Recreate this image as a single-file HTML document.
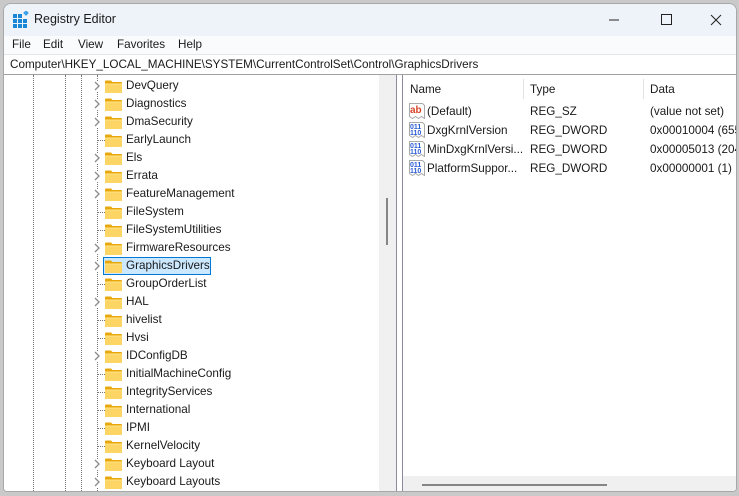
<!DOCTYPE html>
<html><head><style>
*{margin:0;padding:0;box-sizing:border-box}
body{width:739px;height:496px;background:#c9c9c9;font-family:"Liberation Sans",sans-serif;font-size:11.7px;color:#1a1a1a;position:relative;overflow:hidden}
.win{position:absolute;left:3px;top:3px;width:734px;height:489px;background:#fff;border:1px solid #a8a8a8;border-radius:8px 8px 4px 4px;overflow:hidden}
.title{position:absolute;left:0;top:0;width:100%;height:32px;background:#eef3f9}
.menu{position:absolute;left:0;top:32px;width:100%;height:19px;background:#f9fbfd}
.menu span{position:absolute;top:2px}
.addr{position:absolute;left:0;top:50px;width:100%;height:21px;background:#fff;border-top:1px solid #e6e6e6;border-bottom:1px solid #a0a0a0}
.left{position:absolute;left:0;top:71px;width:392px;height:418px;background:#fff}
.row{position:absolute;left:0;height:18px;width:375px}
.row .t{position:absolute;left:122px;top:2px;white-space:nowrap}
.chev{position:absolute;left:89px;top:4px}
.fold{position:absolute;left:101px;top:3px}
.dh{position:absolute;left:94px;top:9px;width:7px;border-top:1px dotted #777}
.vd{position:absolute;top:0;height:418px;border-left:1px dotted #777}
.sb{position:absolute;left:375px;top:0;width:17px;height:418px;background:#f0f0f0}
.right{position:absolute;left:398px;top:71px;width:336px;height:418px;background:#fff;border-left:1px solid #8a8a9a}
.cell{position:absolute;white-space:nowrap}
</style></head><body>
<div class="win">
 <div class="title">
  <svg style="position:absolute;left:9px;top:7px" width="17" height="17" viewBox="0 0 17 17">
   <g fill="#1a86d6"><rect x="0" y="3" width="4" height="4"/><rect x="5" y="3" width="4" height="4"/><rect x="0" y="8" width="4" height="4"/><rect x="5" y="8" width="4" height="4"/><rect x="10" y="8" width="4" height="4"/><rect x="0" y="13" width="4" height="4"/><rect x="5" y="13" width="4" height="4"/><rect x="10" y="13" width="4" height="4"/></g>
   <rect x="11" y="0" width="4" height="4" fill="#3aa0e8" transform="rotate(45 13 2)"/>
  </svg>
  <span style="position:absolute;left:30px;top:8px;font-size:12.5px">Registry Editor</span>
  <svg style="position:absolute;left:604px;top:9px" width="120" height="14"><line x1="1" y1="7" x2="11" y2="7" stroke="#222"/><rect x="53.5" y="1.5" width="10" height="10" fill="none" stroke="#222"/><path d="M103 2l10 10M113 2l-10 10" stroke="#222"/></svg>
 </div>
 <div class="menu"><span style="left:8px">File</span><span style="left:39px">Edit</span><span style="left:74px">View</span><span style="left:113px">Favorites</span><span style="left:174px">Help</span></div>
 <div class="addr"><span style="position:absolute;left:6px;top:3px">Computer\HKEY_LOCAL_MACHINE\SYSTEM\CurrentControlSet\Control\GraphicsDrivers</span></div>
 <div class="left">
  <div class="vd" style="left:29px"></div><div class="vd" style="left:61px"></div><div class="vd" style="left:77px"></div><div class="vd" style="left:93px"></div>
  <div id="tree"></div>
  <div class="sb"><div style="position:absolute;left:7px;top:123px;width:2px;height:47px;background:#858585"></div></div>
  <div style="position:absolute;left:392px;top:0;width:6px;height:418px;background:#fff;border-left:1px solid #8a8a9a"></div>
 </div>
 <div class="right">
  <div style="position:absolute;left:120px;top:4px;height:20px;border-left:1px solid #e3e3e3"></div>
  <div style="position:absolute;left:240px;top:4px;height:20px;border-left:1px solid #e3e3e3"></div>
  <span class="cell" style="left:7px;top:8px">Name</span><span class="cell" style="left:127px;top:8px">Type</span><span class="cell" style="left:247px;top:8px">Data</span>
  <svg style="position:absolute;left:6px;top:28px" width="16" height="16"><path d="M0.5 0.5h13l2 2v13l-3-2-3 2-3-2-3 2-3-2z" fill="#fff" stroke="#aaa"/><text x="1" y="10" font-size="10" font-weight="bold" fill="#d9462b" font-family="Liberation Sans">ab</text></svg>
  <span class="cell" style="left:24px;top:30px">(Default)</span><span class="cell" style="left:127px;top:30px">REG_SZ</span><span class="cell" style="left:247px;top:30px">(value not set)</span>
  <svg style="position:absolute;left:6px;top:47px" width="16" height="16"><path d="M0.5 0.5h13l2 2v13l-3-2-3 2-3-2-3 2-3-2z" fill="#fff" stroke="#aaa"/><text x="1" y="7" font-size="7" font-weight="bold" fill="#2a5bd7" font-family="Liberation Sans">011</text><text x="1" y="13" font-size="7" font-weight="bold" fill="#2a5bd7" font-family="Liberation Sans">110</text></svg>
  <span class="cell" style="left:24px;top:49px">DxgKrnlVersion</span><span class="cell" style="left:127px;top:49px">REG_DWORD</span><span class="cell" style="left:247px;top:49px">0x00010004 (655</span>
  <svg style="position:absolute;left:6px;top:66px" width="16" height="16"><path d="M0.5 0.5h13l2 2v13l-3-2-3 2-3-2-3 2-3-2z" fill="#fff" stroke="#aaa"/><text x="1" y="7" font-size="7" font-weight="bold" fill="#2a5bd7" font-family="Liberation Sans">011</text><text x="1" y="13" font-size="7" font-weight="bold" fill="#2a5bd7" font-family="Liberation Sans">110</text></svg>
  <span class="cell" style="left:24px;top:68px">MinDxgKrnlVersi...</span><span class="cell" style="left:127px;top:68px">REG_DWORD</span><span class="cell" style="left:247px;top:68px">0x00005013 (204</span>
  <svg style="position:absolute;left:6px;top:85px" width="16" height="16"><path d="M0.5 0.5h13l2 2v13l-3-2-3 2-3-2-3 2-3-2z" fill="#fff" stroke="#aaa"/><text x="1" y="7" font-size="7" font-weight="bold" fill="#2a5bd7" font-family="Liberation Sans">011</text><text x="1" y="13" font-size="7" font-weight="bold" fill="#2a5bd7" font-family="Liberation Sans">110</text></svg>
  <span class="cell" style="left:24px;top:87px">PlatformSuppor...</span><span class="cell" style="left:127px;top:87px">REG_DWORD</span><span class="cell" style="left:247px;top:87px">0x00000001 (1)</span>
  <div style="position:absolute;left:0;top:401px;width:334px;height:17px;background:#f0f0f0"><div style="position:absolute;left:19px;top:8px;width:185px;height:2px;background:#858585"></div></div>
 </div>
</div>
<script>
var items=[["DevQuery",1],["Diagnostics",1],["DmaSecurity",1],["EarlyLaunch",0],["Els",1],["Errata",1],["FeatureManagement",1],["FileSystem",0],["FileSystemUtilities",0],["FirmwareResources",1],["GraphicsDrivers",1],["GroupOrderList",0],["HAL",1],["hivelist",0],["Hvsi",0],["IDConfigDB",1],["InitialMachineConfig",0],["IntegrityServices",0],["International",0],["IPMI",0],["KernelVelocity",0],["Keyboard Layout",1],["Keyboard Layouts",1]];
var h="";
var fold='<svg class="fold" width="17" height="13" viewBox="0 0 17 13"><path d="M0 1.5a1 1 0 0 1 1-1h5l1.5 1.5H16a1 1 0 0 1 1 1V12a1 1 0 0 1-1 1H1a1 1 0 0 1-1-1z" fill="#e8a80c"/><rect x="0" y="3.5" width="17" height="9.5" rx="1" fill="#fcd565"/><rect x="0" y="3.5" width="17" height="1" fill="#ffe38c"/></svg>';
items.forEach(function(it,i){
 var y=2+i*18;
 var sel=it[0]=="GraphicsDrivers";
 h+='<div class="row" style="top:'+y+'px">';
 if(it[1]) h+='<svg class="chev" width="8" height="10" style="background:#fff"><path d="M2 1l4 4-4 4" fill="none" stroke="#8a8a8a" stroke-width="1.3"/></svg>';
 else h+='<div class="dh"></div>';
 if(sel) h+='<div style="position:absolute;left:99px;top:0;width:108px;height:18px;background:#cce8ff;border:1px solid #0078d7"></div>';
 h+=fold+'<span class="t">'+it[0]+'</span></div>';
});
document.getElementById("tree").innerHTML=h;
</script>
</body></html>
